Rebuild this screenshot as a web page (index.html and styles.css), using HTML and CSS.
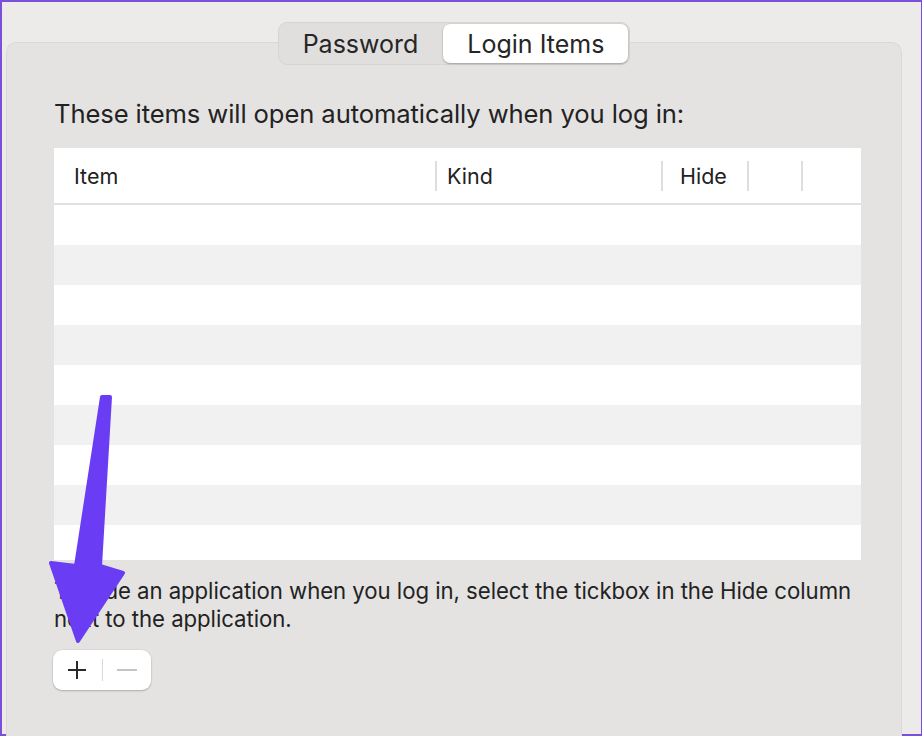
FILE: index.html
```html
<!DOCTYPE html>
<html lang="en">

<head>
  <meta charset="UTF-8" />
  <title>Login Items</title>
  <link rel="stylesheet" href="styles.css">
</head>

<body>
  <div class="window">
    <div class="pane">
      <!-- Segmented control -->
      <div class="tabs">
        <button class="tab">Password</button>
        <button class="tab selected">Login Items</button>
      </div>

      <p class="intro">These items will open automatically when you log in:</p>

      <div class="table">
        <div class="head">
          <div class="col col-item">Item</div>
          <div class="col col-kind">Kind</div>
          <div class="col col-hide">Hide</div>
          <div class="col col-extra"></div>
          <div class="col col-last"></div>
        </div>
        <div class="row"></div>
        <div class="row"></div>
        <div class="row"></div>
        <div class="row"></div>
        <div class="row"></div>
        <div class="row"></div>
        <div class="row"></div>
        <div class="row"></div>
        <div class="row short"></div>
      </div>

      <p class="hint">To hide an application when you log in, select the tickbox in the Hide column<br>next to the application.</p>

      <div class="add-remove">
        <button class="ar-btn">
          <svg width="20" height="20" viewBox="0 0 20 20"><path d="M10 1v18M1 10h18" stroke="#2a2a2a" stroke-width="2"/></svg>
        </button>
        <span class="ar-sep"></span>
        <button class="ar-btn">
          <svg width="22" height="20" viewBox="0 0 22 20"><path d="M1 10h20" stroke="#c4c4c4" stroke-width="2"/></svg>
        </button>
      </div>
    </div>

    <!-- pointer arrow -->
    <svg class="pointer" width="922" height="736" viewBox="0 0 922 736">
      <polygon points="102,397 110,397 100,566 123,573 78,641 51,563 76,566" fill="#6a3df4" stroke="#6a3df4" stroke-width="4" stroke-linejoin="round"/>
    </svg>
  </div>
</body>

</html>
```

FILE: styles.css
```css
* {
  margin: 0;
  padding: 0;
  box-sizing: border-box;
}

html,
body {
  width: 922px;
  height: 736px;
  overflow: hidden;
  font-family: Inter, "Noto Sans", sans-serif;
  color: #222;
}

.window {
  position: relative;
  width: 922px;
  height: 736px;
  background-color: #ecebea;
  border: 2px solid #7a4fdb;
  border-right-width: 1px;
  padding: 40px 19px 0 4px;
}

.pane {
  height: 694px;
  background-color: #e4e3e2;
  border: 1px solid #dad9d8;
  border-bottom: none;
  border-radius: 10px 10px 0 0;
  padding: 0 40px 0 47px;
  display: flex;
  flex-direction: column;
}

.tabs {
  align-self: center;
  margin: -21px 7px 0 0;
  display: flex;
  gap: 2px;
  padding: 1px;
  height: 43px;
  background-color: #e0dfde;
  border: 1px solid #d6d5d4;
  border-radius: 9px;
}

.tab {
  border: none;
  background: transparent;
  font-family: inherit;
  font-size: 25px;
  color: #262626;
  padding: 0 23px;
  border-radius: 7px;
}

.tab.selected {
  background-color: #fff;
  padding: 0 24px;
  box-shadow: 0 1px 2px rgba(0, 0, 0, 0.25), 0 0 0 0.5px rgba(0, 0, 0, 0.08);
}

.intro {
  margin-top: 34px;
  font-size: 25.6px;
  line-height: 30px;
  letter-spacing: -0.1px;
}

.table {
  margin-top: 19px;
  background-color: #fff;
  height: 412px;
}

.head {
  display: flex;
  height: 57px;
  border-bottom: 2px solid #e1e1e1;
  align-items: center;
}

.col {
  height: 30px;
  line-height: 30px;
  font-size: 21.5px;
  padding-left: 10px;
  border-left: 2px solid #dedede;
}

.col-item {
  width: 381px;
  padding-left: 20px;
  border-left: none;
}

.col-kind {
  width: 226px;
}

.col-hide {
  width: 86px;
  padding-left: 17px;
}

.col-extra {
  width: 54px;
}

.col-last {
  flex: 1;
}

.row {
  height: 40px;
}

.row:nth-child(odd) {
  background-color: #f1f1f1;
}

.row.short {
  height: 35px;
}

.hint {
  margin-top: 17px;
  font-size: 22.2px;
  line-height: 28px;
  letter-spacing: -0.05px;
  white-space: nowrap;
}

.add-remove {
  margin-top: 17px;
  margin-left: -1px;
  align-self: flex-start;
  display: flex;
  align-items: center;
  width: 98px;
  height: 40px;
  background-color: #fff;
  border-radius: 9px;
  box-shadow: 0 1px 2px rgba(0, 0, 0, 0.22), 0 0 0 0.5px rgba(0, 0, 0, 0.06);
}

.ar-btn {
  flex: 1;
  height: 100%;
  border: none;
  background: transparent;
  display: flex;
  align-items: center;
  justify-content: center;
}

.ar-sep {
  width: 1px;
  height: 22px;
  background-color: #d8d8d8;
}

.pointer {
  position: absolute;
  top: -2px;
  left: -2px;
  pointer-events: none;
}
```
